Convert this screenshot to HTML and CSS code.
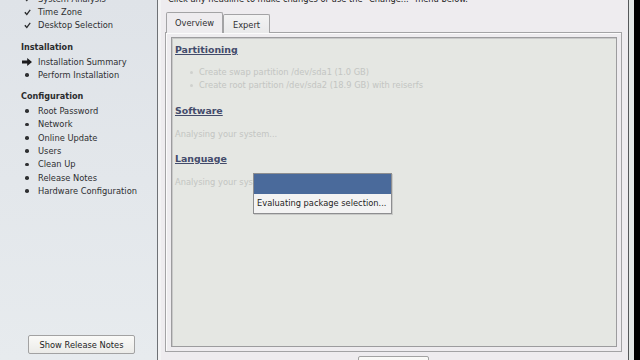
FILE: index.html
```html
<!DOCTYPE html>
<html lang="en">
<head>
  <meta charset="UTF-8">
  <meta name="viewport" content="width=device-width, initial-scale=1.0">
  <title>Installation Summary</title>
  <link rel="stylesheet" href="styles.css">
</head>
<body>
  <div class="screen">

    <!-- 왼쪽 단계 목록 -->
    <aside class="sidebar">
      <ul class="steps first">
        <li><span class="ico"><svg class="check" viewBox="0 0 10 10"><path d="M0.4 5.4 L2.3 4.1 L3.9 6.3 L8.2 0.6 L9.6 1.7 L4.1 9.2 Z"/></svg></span>System Analysis</li>
        <li><span class="ico"><svg class="check" viewBox="0 0 10 10"><path d="M0.4 5.4 L2.3 4.1 L3.9 6.3 L8.2 0.6 L9.6 1.7 L4.1 9.2 Z"/></svg></span>Time Zone</li>
        <li><span class="ico"><svg class="check" viewBox="0 0 10 10"><path d="M0.4 5.4 L2.3 4.1 L3.9 6.3 L8.2 0.6 L9.6 1.7 L4.1 9.2 Z"/></svg></span>Desktop Selection</li>
      </ul>

      <h3 class="group">Installation</h3>
      <ul class="steps">
        <li class="current"><span class="ico"><svg class="arrow" viewBox="0 0 10 8"><path d="M0 2.4 H5.2 V0 L10 4 L5.2 8 V5.6 H0 Z"/></svg></span>Installation Summary</li>
        <li><span class="ico"><span class="dot"></span></span>Perform Installation</li>
      </ul>

      <h3 class="group">Configuration</h3>
      <ul class="steps tight">
        <li><span class="ico"><span class="dot"></span></span>Root Password</li>
        <li><span class="ico"><span class="dot"></span></span>Network</li>
        <li><span class="ico"><span class="dot"></span></span>Online Update</li>
        <li><span class="ico"><span class="dot"></span></span>Users</li>
        <li><span class="ico"><span class="dot"></span></span>Clean Up</li>
        <li><span class="ico"><span class="dot"></span></span>Release Notes</li>
        <li><span class="ico"><span class="dot"></span></span>Hardware Configuration</li>
      </ul>

      <button class="btn notes-btn">Show Release Notes</button>
    </aside>

    <div class="gap-strip"></div>

    <!-- 오른쪽 요약 화면 -->
    <main class="main">
      <p class="caption">Click any headline to make changes or use the "Change..." menu below.</p>

      <div class="tabs">
        <div class="tab active">Overview</div>
        <div class="tab">Expert</div>
      </div>

      <div class="panel">
        <div class="summary">
          <a class="headline" href="">Partitioning</a>
          <ul class="proposal">
            <li>Create swap partition /dev/sda1 (1.0 GB)</li>
            <li>Create root partition /dev/sda2 (18.9 GB) with reiserfs</li>
          </ul>

          <a class="headline" href="">Software</a>
          <p class="pending">Analysing your system...</p>

          <a class="headline" href="">Language</a>
          <p class="pending">Analysing your system...</p>
        </div>
      </div>

      <!-- 화면 아래로 잘린 버튼 (윗부분만 보임) -->
      <button class="btn change-btn" aria-label="Change..."></button>

      <!-- 진행 팝업 -->
      <div class="popup">
        <div class="popup-title"></div>
        <div class="popup-body">Evaluating package selection...</div>
      </div>
    </main>

    <div class="edge-strip"></div>
    <div class="edge-black"></div>
  </div>
</body>
</html>
```

FILE: styles.css
```css
/* 기본 색상 */
html {
  --color-text: #2e2f31;
  --color-dim: #c3c5c2;
  --color-link: #434b6b;
  --color-line: #a3a3a5;
}

body {
  margin: 0;
  width: 640px;
  height: 360px;
  overflow: hidden;
  background: #000;
  font-family: "DejaVu Sans", Verdana, sans-serif;
  font-size: 8.3px;
  color: var(--color-text);
}

.screen {
  display: flex;
  height: 360px;
}

/* 사이드바 */
.sidebar {
  width: 157px;
  flex: none;
  display: flex;
  flex-direction: column;
  background: linear-gradient(#dfe3e8, #e7ebee);
  border-right: 1px solid #6e7175;
}

.steps {
  list-style: none;
  margin: 0;
  padding: 0 0 0 19px;
}

.steps.first {
  margin-top: -8px;
}

.steps li {
  display: flex;
  align-items: center;
  height: 13.4px;
  white-space: nowrap;
}

.ico {
  width: 16px;
  margin-right: 3px;
  display: flex;
  justify-content: center;
  align-items: center;
}

.check {
  width: 7px;
  height: 7px;
  fill: #2a2b2d;
}

.arrow {
  width: 10px;
  height: 8px;
  fill: #1c1c1e;
}

.dot {
  width: 3.6px;
  height: 3.6px;
  border-radius: 50%;
  background: #2f3032;
}

.group {
  margin: 8.5px 0 1px 21px;
  height: 13.4px;
  line-height: 13.4px;
  font-size: 8.1px;
  font-weight: bold;
  color: #2a2b2d;
}

.group + .tight {
  margin-top: -0.5px;
}

.btn {
  font-family: inherit;
  font-size: 8.3px;
  color: #1e1e1e;
  border: 1px solid #a2a2a2;
  border-radius: 2px;
  background: linear-gradient(#fafaf8, #ebebe8);
  padding: 0;
}

.notes-btn {
  margin: auto 0 6px 28px;
  width: 107px;
  height: 19px;
  flex: none;
}

.gap-strip {
  width: 3px;
  flex: none;
  background: #f3f3f4;
}

/* 메인 영역 */
.main {
  position: relative;
  width: 468px;
  flex: none;
  padding: 0 6px 0 4px;
  box-sizing: border-box;
  background: #eeecef;
  border-right: 1px solid #55585a;
  display: flex;
  flex-direction: column;
}

.caption {
  margin: -6px 0 0 3px;
  height: 11px;
  line-height: 11px;
  color: #222;
  white-space: nowrap;
  flex: none;
}

.tabs {
  display: flex;
  align-items: flex-end;
  height: 21px;
  margin: 7px 0 -1px 1px;
  position: relative;
  z-index: 1;
  flex: none;
}

.tab {
  height: 17px;
  padding-top: 1px;
  box-sizing: content-box;
  border: 1px solid var(--color-line);
  border-bottom: 0;
  border-radius: 2px 2px 0 0;
  background: linear-gradient(#f3f3f3, #e9e9ea);
  display: flex;
  align-items: center;
  justify-content: center;
  width: 45px;
}

.tab.active {
  width: 55px;
  height: 20px;
  padding-top: 0;
  background: #eeecef;
}

.panel {
  height: 320px;
  flex: none;
  box-sizing: border-box;
  border: 1px solid var(--color-line);
  box-shadow: inset 1px 1px 0 #fbfbfb;
  padding: 4px 4px 4px 5px;
}

.summary {
  height: 100%;
  box-sizing: border-box;
  border: 1px solid #9c9c9e;
  box-shadow: inset 1px 1px 0 #c9c9c9;
  background: #e5e7e3;
  padding: 6px 3px 4px;
  display: flex;
  flex-direction: column;
  align-items: flex-start;
}

.headline {
  display: block;
  height: 12px;
  line-height: 12px;
  font-size: 9.4px;
  font-weight: bold;
  color: var(--color-link);
  text-decoration: underline;
  margin-top: 13px;
}

.headline:first-child {
  margin-top: 0;
}

.proposal {
  margin: 10px 0 0;
  padding: 0 0 0 24px;
  list-style: none;
  color: var(--color-dim);
}

.proposal li {
  height: 13px;
  line-height: 13px;
  position: relative;
  padding-left: 9px;
  margin-left: -9px;
}

.proposal li::before {
  content: "";
  position: absolute;
  left: 0;
  top: 5px;
  width: 3px;
  height: 3px;
  border-radius: 50%;
  background: #cfd1ce;
}

.pending {
  margin: 11px 0 0;
  height: 12px;
  line-height: 12px;
  color: var(--color-dim);
}

.change-btn {
  margin: 4px auto 0;
  width: 71px;
  height: 20px;
  flex: none;
}

/* 팝업 */
.popup {
  position: absolute;
  left: 92px;
  top: 173px;
  width: 139px;
  height: 41px;
  box-sizing: border-box;
  border: 1px solid #8d8e90;
  background: #f3f3f3;
  box-shadow: 1px 1px 0 #c9cac8;
}

.popup-title {
  height: 20px;
  background: #4a6a9b;
}

.popup-body {
  padding-left: 3px;
  height: 19px;
  line-height: 19px;
  color: #1f1f1f;
  white-space: nowrap;
}

.edge-strip {
  width: 5px;
  flex: none;
  background: #e3e8e6;
}

.edge-black {
  flex: 1;
  background: #000;
}
```
